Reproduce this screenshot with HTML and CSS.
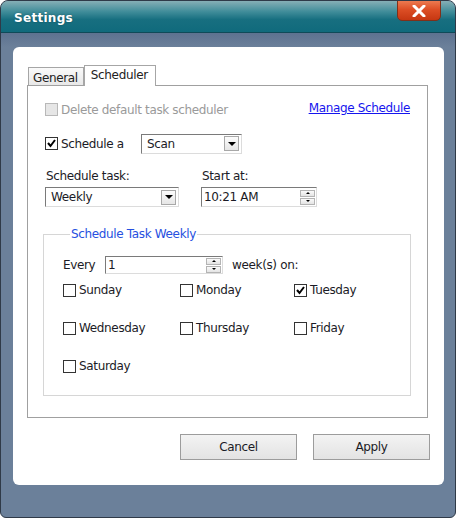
FILE: index.html
```html
<!DOCTYPE html>
<html lang="en">
<head>
    <meta charset="UTF-8">
    <title>Settings</title>
    <link rel="stylesheet" href="styles.css">
</head>
<body>
    <div class="window">
        <div class="titlebar">
            <span class="title">Settings</span>
            <button class="close-btn" title="Close">
                <svg width="14" height="12" viewBox="0 0 14 12">
                    <path d="M2 1 L12 11 M12 1 L2 11" stroke="#fff" stroke-width="3" stroke-linecap="round"/>
                </svg>
            </button>
        </div>

        <div class="frame">
            <div class="panel">
                <div class="tabs">
                    <div class="tab">General</div>
                    <div class="tab active">Scheduler</div>
                </div>

                <div class="tab-page">
                    <div class="row row-top">
                        <label class="check disabled"><span class="box"></span>Delete default task scheduler</label>
                        <a href="#" class="link">Manage Schedule</a>
                    </div>

                    <div class="row row-type">
                        <label class="check"><span class="box checked"><svg width="11" height="11" viewBox="0 0 11 11"><path d="M2 5 L4.5 8 L9 2" stroke="#000" stroke-width="2" fill="none"/></svg></span>Schedule a</label>
                        <div class="select select-scan">
                            <span class="select-value">Scan</span>
                            <span class="drop-btn"><span class="arrow-down"></span></span>
                        </div>
                    </div>

                    <div class="fields">
                        <div class="field field-freq">
                            <div class="field-label">Schedule task:</div>
                            <div class="select select-freq">
                                <span class="select-value">Weekly</span>
                                <span class="drop-btn"><span class="arrow-down"></span></span>
                            </div>
                        </div>
                        <div class="field">
                            <div class="field-label">Start at:</div>
                            <div class="spin spin-time">
                                <span class="spin-value">10:21 AM</span>
                                <span class="spin-btns">
                                    <span class="spin-btn"><span class="arrow-up"></span></span>
                                    <span class="spin-btn"><span class="arrow-down small"></span></span>
                                </span>
                            </div>
                        </div>
                    </div>

                    <fieldset class="group">
                        <legend>Schedule Task Weekly</legend>
                        <div class="every">
                            <span class="every-label">Every</span>
                            <div class="spin spin-weeks">
                                <span class="spin-value">1</span>
                                <span class="spin-btns">
                                    <span class="spin-btn"><span class="arrow-up"></span></span>
                                    <span class="spin-btn"><span class="arrow-down small"></span></span>
                                </span>
                            </div>
                            <span>week(s) on:</span>
                        </div>
                        <div class="days">
                            <label class="check"><span class="box"></span>Sunday</label>
                            <label class="check"><span class="box"></span>Monday</label>
                            <label class="check"><span class="box checked"><svg width="11" height="11" viewBox="0 0 11 11"><path d="M2 5 L4.5 8 L9 2" stroke="#000" stroke-width="2" fill="none"/></svg></span>Tuesday</label>
                            <label class="check"><span class="box"></span>Wednesday</label>
                            <label class="check"><span class="box"></span>Thursday</label>
                            <label class="check"><span class="box"></span>Friday</label>
                            <label class="check"><span class="box"></span>Saturday</label>
                        </div>
                    </fieldset>
                </div>

                <div class="actions">
                    <button class="btn">Cancel</button>
                    <button class="btn">Apply</button>
                </div>
            </div>
        </div>
    </div>
</body>
</html>
```

FILE: styles.css
```css
body {
    margin: 0;
    padding: 0;
    background-color: #fff;
    font-family: "DejaVu Sans", Verdana, sans-serif;
    font-size: 12px;
    letter-spacing: -0.35px;
    color: #1b1b26;
}

.window {
    width: 456px;
    height: 518px;
    box-sizing: border-box;
    border: 1px solid #2f3a48;
    border-radius: 8px 8px 6px 6px;
    background-color: #6b809a;
    overflow: hidden;
}

/* Title bar */
.titlebar {
    height: 31px;
    display: flex;
    justify-content: space-between;
    align-items: flex-start;
    padding: 0 14px 0 13px;
    background: linear-gradient(#86afb6 0%, #3f8c99 35%, #176f80 60%, #106a7c 100%);
    border-bottom: 1px solid #0f4a58;
    box-shadow: 0 1px 0 #9db1c4;
}

.title {
    margin-top: 10px;
    color: #fff;
    font-weight: bold;
    font-size: 12px;
    letter-spacing: 0.3px;
    text-shadow: 0 0 2px rgba(0, 0, 0, 0.3);
}

.close-btn {
    width: 44px;
    height: 21px;
    margin-top: -1px;
    padding: 0;
    border: 1px solid #80301a;
    border-radius: 0 0 5px 5px;
    background: linear-gradient(#ec7a50 0%, #dc4e25 45%, #c63712 100%);
    display: flex;
    align-items: center;
    justify-content: center;
}

/* Frame and white panel */
.frame {
    padding: 14px 11px 0 12px;
    background: linear-gradient(#5d7290 0, #6b809a 14px);
}

.panel {
    height: 438px;
    box-sizing: border-box;
    background-color: #fff;
    border-radius: 6px;
    padding: 18px 16px 0 14px;
}

/* Tabs */
.tabs {
    display: flex;
    align-items: flex-end;
    height: 20px;
    padding-left: 1px;
}

.tab {
    height: 18px;
    box-sizing: border-box;
    padding: 3px 5px 0 4px;
    border: 1px solid #a6a6a6;
    border-bottom: none;
    background: linear-gradient(#fafafa, #e8e8e8);
    color: #222;
}

.tab.active {
    height: 21px;
    margin-bottom: -1px;
    padding: 2px 7px 0 6px;
    background: #fff;
    position: relative;
    z-index: 1;
}

.tab-page {
    height: 333px;
    box-sizing: border-box;
    border: 1px solid #a0a0a0;
    padding: 17px 17px 0 17px;
}

.row {
    display: flex;
    align-items: center;
}

.row-top {
    justify-content: space-between;
    height: 13px;
}

.row-type {
    margin-top: 17px;
    height: 21px;
}

.row-type .check {
    width: 96px;
}

/* Checkboxes */
.check {
    display: flex;
    align-items: center;
    white-space: nowrap;
}

.box {
    width: 13px;
    height: 13px;
    box-sizing: border-box;
    border: 1px solid #333;
    background: #fff;
    margin-right: 3px;
    display: flex;
    align-items: center;
    justify-content: center;
}

.check.disabled {
    color: #9a9a9a;
}

.check.disabled .box {
    border-color: #b8b8b8;
    background: #e6e6e6;
}

.link {
    color: #1515ee;
    text-decoration: underline;
    margin-top: -3px;
}

/* Selects */
.select {
    display: flex;
    align-items: center;
    justify-content: space-between;
    box-sizing: border-box;
    border: 1px solid;
    border-color: #7a7a7a #dcdcdc #dcdcdc #7a7a7a;
    background: #fff;
    padding: 0 2px 0 5px;
}

.select-scan {
    width: 101px;
    height: 20px;
}

.drop-btn {
    width: 15px;
    height: 15px;
    box-sizing: border-box;
    border: 1px solid #a8a8a8;
    background: linear-gradient(#fcfcfc, #e6e6e6);
    display: flex;
    align-items: center;
    justify-content: center;
}

.arrow-down {
    width: 0;
    height: 0;
    border-left: 4px solid transparent;
    border-right: 4px solid transparent;
    border-top: 4px solid #000;
}

.arrow-down.small,
.arrow-up {
    border-left-width: 2px;
    border-right-width: 2px;
    border-top-width: 2px;
}

.arrow-up {
    width: 0;
    height: 0;
    border-left: 2px solid transparent;
    border-right: 2px solid transparent;
    border-bottom: 2px solid #000;
}

/* Schedule task / start at */
.fields {
    display: flex;
    margin-top: 15px;
}

.field-label {
    height: 18px;
    padding-left: 1px;
}

.field-freq {
    width: 156px;
}

.select-freq {
    width: 134px;
    height: 20px;
}

.spin {
    display: flex;
    align-items: center;
    justify-content: space-between;
    box-sizing: border-box;
    border: 1px solid;
    border-color: #7a7a7a #dcdcdc #dcdcdc #7a7a7a;
    background: #fff;
    padding: 0 1px 0 2px;
}

.spin-time {
    width: 116px;
    height: 20px;
}

.spin-btns {
    display: flex;
    flex-direction: column;
    gap: 1px;
}

.spin-btn {
    width: 15px;
    height: 7px;
    box-sizing: border-box;
    border: 1px solid #b4b4b4;
    background: linear-gradient(#fafafa, #e4e4e4);
    display: flex;
    align-items: center;
    justify-content: center;
}

/* Weekly group */
.group {
    margin: 20px 0 0 -2px;
    width: 368px;
    height: 169px;
    box-sizing: border-box;
    border: 1px solid #d6d6d6;
    padding: 14px 0 0 19px;
}

.group legend {
    color: #2650e0;
    padding: 0 1px;
    margin-left: 7px;
}

.every {
    display: flex;
    align-items: center;
    height: 18px;
    margin-top: 1px;
}

.every-label {
    width: 42px;
}

.spin-weeks {
    width: 118px;
    height: 18px;
    margin-right: 9px;
}

.days {
    display: grid;
    grid-template-columns: 117px 114px 1fr;
    row-gap: 25px;
    margin-top: 10px;
    line-height: 13px;
}

/* Bottom buttons */
.actions {
    display: flex;
    justify-content: flex-end;
    gap: 16px;
    margin-top: 16px;
    margin-right: -2px;
}

.btn {
    width: 117px;
    height: 26px;
    border: 1px solid #9c9c9c;
    background: linear-gradient(#f3f3f3, #e3e3e3);
    font-family: "DejaVu Sans", Verdana, sans-serif;
    font-size: 12px;
    letter-spacing: -0.35px;
    color: #1b1b26;
    padding: 0;
}
```
